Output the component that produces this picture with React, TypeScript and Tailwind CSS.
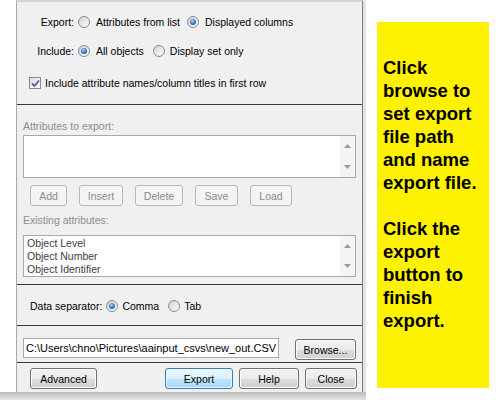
import React from "react";

function Radio({ on }: { on?: boolean }) {
  return (
    <span className="flex h-[12px] w-[12px] shrink-0 items-center justify-center rounded-full border border-[#8a8a8a] bg-[linear-gradient(135deg,#d2d2d2,#fdfdfd)]">
      {on && (
        <span className="h-[6px] w-[6px] rounded-full bg-[radial-gradient(circle_at_40%_35%,#a9d6f7_0%,#2c72c4_55%,#14458c_100%)]" />
      )}
    </span>
  );
}

function Check() {
  return (
    <span className="flex h-[12px] w-[12px] shrink-0 items-center justify-center border border-[#8a8a8a] bg-[linear-gradient(135deg,#dcdcdc,#ffffff)]">
      <svg width="9" height="9" viewBox="0 0 9 9">
        <path d="M1 4.5 L3.5 7 L8 1.5" fill="none" stroke="#4a5e8c" strokeWidth="1.8" />
      </svg>
    </span>
  );
}

function Scroll() {
  return (
    <div className="flex w-[15px] flex-col items-center justify-between bg-[#f4f4f4] py-[8px]">
      <svg width="7" height="4" viewBox="0 0 7 4">
        <path d="M0 4 L3.5 0 L7 4 Z" fill="#9a9a9a" />
      </svg>
      <svg width="7" height="4" viewBox="0 0 7 4">
        <path d="M0 0 L7 0 L3.5 4 Z" fill="#9a9a9a" />
      </svg>
    </div>
  );
}

function Dis({ label, w }: { label: string; w: string }) {
  return (
    <div
      className={`flex h-[21px] items-center justify-center rounded-[3px] border border-[#b4b8bb] bg-[#f4f4f4] text-[#8a8a8a] ${w}`}
    >
      {label}
    </div>
  );
}

function Btn({ label, w, focus }: { label: string; w: string; focus?: boolean }) {
  return (
    <div
      className={
        focus
          ? `flex h-[21px] items-center justify-center rounded-[3px] border border-[#3c7fb1] bg-[linear-gradient(#eaf6fd_0%,#d9f0fc_50%,#bee6fd_51%,#a7d9f5_100%)] shadow-[inset_0_0_0_1px_#e8f6fd] ${w}`
          : `flex h-[21px] items-center justify-center rounded-[3px] border border-[#707070] bg-[linear-gradient(#f2f2f2_0%,#ebebeb_50%,#dddddd_51%,#cfcfcf_100%)] shadow-[inset_0_0_0_1px_#fbfbfb] ${w}`
      }
    >
      {label}
    </div>
  );
}

function Rule() {
  return <div className="h-px shrink-0 bg-[#3a3a3a]" />;
}

export default function App() {
  return (
    <div className="flex h-[400px] w-[500px] overflow-hidden bg-white font-['Liberation_Sans',Arial,sans-serif] text-[10.5px] leading-[12px] text-black">
      <div className="flex w-[366px] flex-col">
        <div className="flex h-[392px]">
          <div className="w-[16px] bg-white" />
          <div className="flex w-[347px] flex-col border-x border-t-2 border-l-[#a8a8a8] border-r-[#7c7c7c] border-t-[#d4d4d4] bg-[#f0f0f0]">
            {/* export options */}
            <div className="flex h-[102px] shrink-0 flex-col">
              <div className="mt-[12px] flex h-[16px] items-center">
                <span className="w-[57px] text-right">Export:</span>
                <span className="ml-[4px]"><Radio /></span>
                <span className="ml-[6px]">Attributes from list</span>
                <span className="ml-[7px]"><Radio on /></span>
                <span className="ml-[6px]">Displayed columns</span>
              </div>
              <div className="mt-[13px] flex h-[16px] items-center">
                <span className="w-[57px] text-right">Include:</span>
                <span className="ml-[4px]"><Radio on /></span>
                <span className="ml-[6px]">All objects</span>
                <span className="ml-[9px]"><Radio /></span>
                <span className="ml-[5px]">Display set only</span>
              </div>
              <div className="mt-[16px] flex h-[16px] items-center pl-[12px]">
                <Check />
                <span className="ml-[4px]">Include attribute names/column titles in first row</span>
              </div>
            </div>
            <Rule />

            {/* attributes */}
            <div className="flex h-[179px] shrink-0 flex-col px-[6px] text-[#8d8d8d]">
              <div className="mt-[15px] h-[12px]">Attributes to export:</div>
              <div className="mt-[3px] flex h-[43px] w-[333px] justify-end border border-[#a9a9a9] bg-white">
                <Scroll />
              </div>
              <div className="ml-[7px] mt-[7px] flex gap-[12px]">
                <Dis label="Add" w="w-[37px]" />
                <Dis label="Insert" w="w-[44px]" />
                <Dis label="Delete" w="w-[48px]" />
                <Dis label="Save" w="w-[43px]" />
                <Dis label="Load" w="w-[42px]" />
              </div>
              <div className="mt-[8px] h-[12px]">Existing attributes:</div>
              <div className="mt-[9px] flex h-[42px] w-[333px] border border-[#a9a9a9] bg-white">
                <div className="flex-1 pl-[3px] pt-[1px] text-[10.5px] leading-[13px] text-[#3c3c3c]">
                  <div>Object Level</div>
                  <div>Object Number</div>
                  <div>Object Identifier</div>
                </div>
                <Scroll />
              </div>
            </div>
            <Rule />

            {/* separator */}
            <div className="flex h-[40px] shrink-0 items-start pl-[13px]">
              <div className="mt-[13px] flex h-[16px] items-center">
                <span>Data separator:</span>
                <span className="ml-[4px]"><Radio on /></span>
                <span className="ml-[4px]">Comma</span>
                <span className="ml-[9px]"><Radio /></span>
                <span className="ml-[4px]">Tab</span>
              </div>
            </div>
            <Rule />

            {/* file path */}
            <div className="flex h-[36px] shrink-0 items-start pl-[6px]">
              <div className="mt-[12px] flex h-[20px] w-[256px] items-center overflow-hidden whitespace-nowrap border border-[#a9a9a9] bg-white pl-[2px] text-[11px]">
                C:\Users\chno\Pictures\aainput_csvs\new_out.CSV
              </div>
              <div className="ml-[16px] mt-[13px]">
                <Btn label="Browse..." w="w-[61px] h-[19px]" />
              </div>
            </div>
            <Rule />

            {/* actions */}
            <div className="flex h-[29px] shrink-0 items-start pl-[13px] pt-[5px]">
              <Btn label="Advanced" w="w-[67px]" />
              <div className="ml-[68px] flex gap-[6px]">
                <Btn label="Export" w="w-[68px]" focus />
                <Btn label="Help" w="w-[60px]" />
                <Btn label="Close" w="w-[52px]" />
              </div>
            </div>
          </div>
          <div className="w-[3px] bg-[#e4e4e4]" />
        </div>
        <div className="h-[8px] bg-[linear-gradient(#b9b9b9,#e6e6e6)]" />
      </div>

      <div className="ml-[11px] mt-[22px] h-[366px] w-[112px] bg-[#fff200] pl-[6px] pt-[34px] text-[18.5px] font-bold leading-[23px] text-black">
        <p>Click</p>
        <p>browse to</p>
        <p>set export</p>
        <p>file path</p>
        <p>and name</p>
        <p>export file.</p>
        <p>&nbsp;</p>
        <p>Click the</p>
        <p>export</p>
        <p>button to</p>
        <p>finish</p>
        <p>export.</p>
      </div>
    </div>
  );
}
